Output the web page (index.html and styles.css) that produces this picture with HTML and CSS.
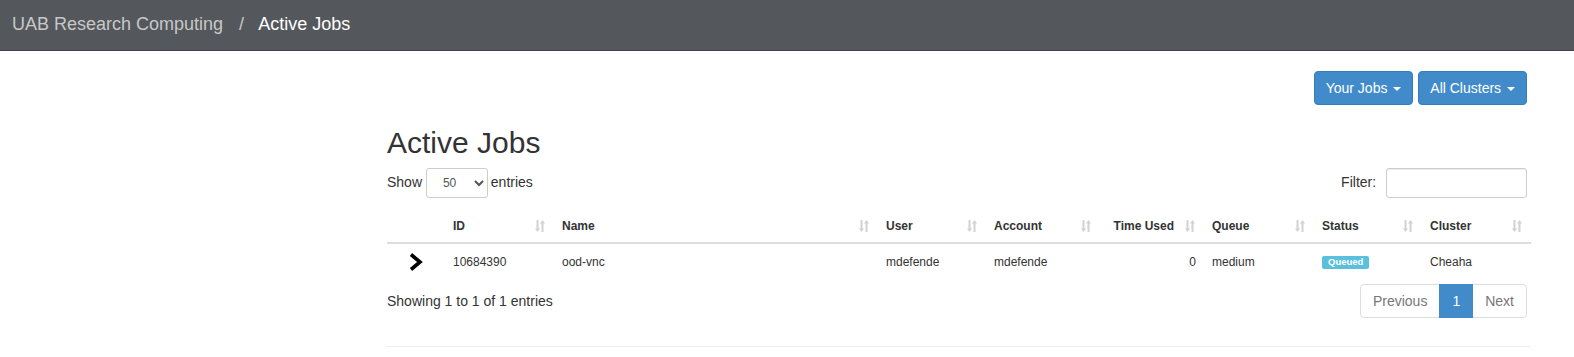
FILE: index.html
```html
<!DOCTYPE html>
<html lang="en">
<head>
  <meta charset="UTF-8">
  <title>Active Jobs</title>
  <link rel="stylesheet" href="styles.css">
</head>
<body>
  <nav class="navbar">
    <span class="brand">UAB Research Computing</span>
    <span class="sep">/</span>
    <span class="current">Active Jobs</span>
  </nav>

  <div class="main">
    <div class="toolbar">
      <button class="btn">Your Jobs <span class="caret"></span></button>
      <button class="btn">All Clusters <span class="caret"></span></button>
    </div>

    <h2 class="title">Active Jobs</h2>

    <div class="controls">
      <label class="length">Show
        <select>
          <option>10</option>
          <option>25</option>
          <option selected>50</option>
          <option>100</option>
        </select>
        entries</label>
      <label class="filter">Filter: <input type="search"></label>
    </div>

    <table class="jobs">
      <colgroup>
        <col style="width: 58px">
        <col style="width: 109px">
        <col style="width: 324px">
        <col style="width: 108px">
        <col style="width: 114px">
        <col style="width: 104px">
        <col style="width: 110px">
        <col style="width: 108px">
        <col style="width: 109px">
      </colgroup>
      <thead>
        <tr>
          <th class="nosort"></th>
          <th>ID <svg class="sort" viewBox="0 0 10 12"><path d="M1.5 0h2v8.5h1.5L2.5 12 0 8.5h1.5z"/><path d="M6.5 12h2V3.5H10L7.5 0 5 3.5h1.5z"/></svg></th>
          <th>Name <svg class="sort" viewBox="0 0 10 12"><path d="M1.5 0h2v8.5h1.5L2.5 12 0 8.5h1.5z"/><path d="M6.5 12h2V3.5H10L7.5 0 5 3.5h1.5z"/></svg></th>
          <th>User <svg class="sort" viewBox="0 0 10 12"><path d="M1.5 0h2v8.5h1.5L2.5 12 0 8.5h1.5z"/><path d="M6.5 12h2V3.5H10L7.5 0 5 3.5h1.5z"/></svg></th>
          <th>Account <svg class="sort" viewBox="0 0 10 12"><path d="M1.5 0h2v8.5h1.5L2.5 12 0 8.5h1.5z"/><path d="M6.5 12h2V3.5H10L7.5 0 5 3.5h1.5z"/></svg></th>
          <th class="num">Time Used <svg class="sort" viewBox="0 0 10 12"><path d="M1.5 0h2v8.5h1.5L2.5 12 0 8.5h1.5z"/><path d="M6.5 12h2V3.5H10L7.5 0 5 3.5h1.5z"/></svg></th>
          <th>Queue <svg class="sort" viewBox="0 0 10 12"><path d="M1.5 0h2v8.5h1.5L2.5 12 0 8.5h1.5z"/><path d="M6.5 12h2V3.5H10L7.5 0 5 3.5h1.5z"/></svg></th>
          <th>Status <svg class="sort" viewBox="0 0 10 12"><path d="M1.5 0h2v8.5h1.5L2.5 12 0 8.5h1.5z"/><path d="M6.5 12h2V3.5H10L7.5 0 5 3.5h1.5z"/></svg></th>
          <th>Cluster <svg class="sort" viewBox="0 0 10 12"><path d="M1.5 0h2v8.5h1.5L2.5 12 0 8.5h1.5z"/><path d="M6.5 12h2V3.5H10L7.5 0 5 3.5h1.5z"/></svg></th>
        </tr>
      </thead>
      <tbody>
        <tr>
          <td class="expand"><svg viewBox="0 0 14 18" width="14" height="18"><path d="M2 1.5l9 7.5-9 7.5" fill="none" stroke="#000" stroke-width="3.6"/></svg></td>
          <td>10684390</td>
          <td>ood-vnc</td>
          <td>mdefende</td>
          <td>mdefende</td>
          <td class="num">0</td>
          <td>medium</td>
          <td><span class="label">Queued</span></td>
          <td>Cheaha</td>
        </tr>
      </tbody>
    </table>

    <div class="footer-row">
      <div class="info">Showing 1 to 1 of 1 entries</div>
      <ul class="pagination">
        <li class="disabled">Previous</li>
        <li class="active">1</li>
        <li class="disabled">Next</li>
      </ul>
    </div>

    <hr>
  </div>
</body>
</html>
```

FILE: styles.css
```css
* {
  box-sizing: border-box;
}

body {
  margin: 0;
  font-family: "Liberation Sans", Arial, sans-serif;
  font-size: 14px;
  line-height: 1.42857;
  color: #333;
  background: #fff;
}

.navbar {
  height: 51px;
  background-color: #54575c;
  border-bottom: 1px solid #404246;
  display: flex;
  align-items: center;
  padding: 0 12px 1px;
  font-size: 18px;
}

.navbar .brand {
  color: #c8c8c8;
}

.navbar .sep {
  color: #c8c8c8;
  padding: 0 14px 0 16px;
}

.navbar .current {
  color: #fff;
}

.main {
  margin: 0 43px 0 387px;
}

.toolbar {
  display: flex;
  justify-content: flex-end;
  gap: 5px;
  margin-top: 20px;
  padding-right: 4px;
}

.btn {
  height: 34px;
  padding: 6px 11px;
  font-family: inherit;
  font-size: 14px;
  line-height: 20px;
  color: #fff;
  background-color: #428bca;
  border: 1px solid #357ebd;
  border-radius: 4px;
}

.caret {
  display: inline-block;
  width: 0;
  height: 0;
  margin-left: 2px;
  vertical-align: middle;
  border-top: 4px solid #fff;
  border-left: 4px solid transparent;
  border-right: 4px solid transparent;
}

.title {
  font-size: 30px;
  font-weight: 500;
  line-height: 1.1;
  margin: 21px 0 9px;
}

.controls {
  display: flex;
  justify-content: space-between;
  align-items: center;
  padding-right: 4px;
}

.controls label {
  font-weight: normal;
}

.length select {
  width: 62px;
  height: 30px;
  margin: 0 -1px 0 0;
  padding: 0 6px 0 12px;
  font-family: inherit;
  font-size: 12px;
  color: #555;
  background: #fff;
  border: 1px solid #ccc;
  border-radius: 3px;
}

.filter input {
  width: 141px;
  height: 30px;
  margin-left: 6px;
  border: 1px solid #ccc;
  border-radius: 3px;
  box-shadow: inset 0 1px 1px rgba(0, 0, 0, 0.075);
  vertical-align: middle;
}

.jobs {
  width: 1144px;
  table-layout: fixed;
  border-collapse: collapse;
  margin-top: 8px;
  font-size: 12px;
}

.jobs th,
.jobs td {
  padding: 8px;
  line-height: 20px;
  text-align: left;
  vertical-align: middle;
}

.jobs th {
  position: relative;
  padding: 10px 30px 6px 8px;
  font-weight: bold;
  color: #333;
  border-bottom: 2px solid #ddd;
}

.jobs .num {
  text-align: right;
}

.jobs .sort {
  position: absolute;
  right: 9px;
  top: 14px;
  width: 10px;
  height: 12px;
  fill: #d2d2d2;
}

.jobs td.expand {
  padding: 6px 0 0 22px;
}

.label {
  display: inline-block;
  padding: 1px 6px 2px;
  font-size: 9.5px;
  font-weight: bold;
  line-height: 10px;
  color: #fff;
  background-color: #5bc0de;
  border-radius: 2px;
  vertical-align: 1px;
}

.footer-row {
  display: flex;
  justify-content: space-between;
  align-items: flex-start;
  margin-top: 4px;
  padding-right: 4px;
}

.info {
  padding-top: 8px;
}

.pagination {
  display: flex;
  list-style: none;
  margin: 0;
  padding: 0;
}

.pagination li {
  height: 34px;
  padding: 6px 12px;
  line-height: 20px;
  border: 1px solid #ddd;
  margin-left: -1px;
  color: #777;
  background: #fff;
}

.pagination li:first-child {
  border-radius: 4px 0 0 4px;
}

.pagination li:last-child {
  border-radius: 0 4px 4px 0;
}

.pagination li.active {
  color: #fff;
  background-color: #428bca;
  border-color: #428bca;
  z-index: 1;
}

hr {
  margin: 28px 0 0;
  border: 0;
  border-top: 1px solid #eee;
}
```
